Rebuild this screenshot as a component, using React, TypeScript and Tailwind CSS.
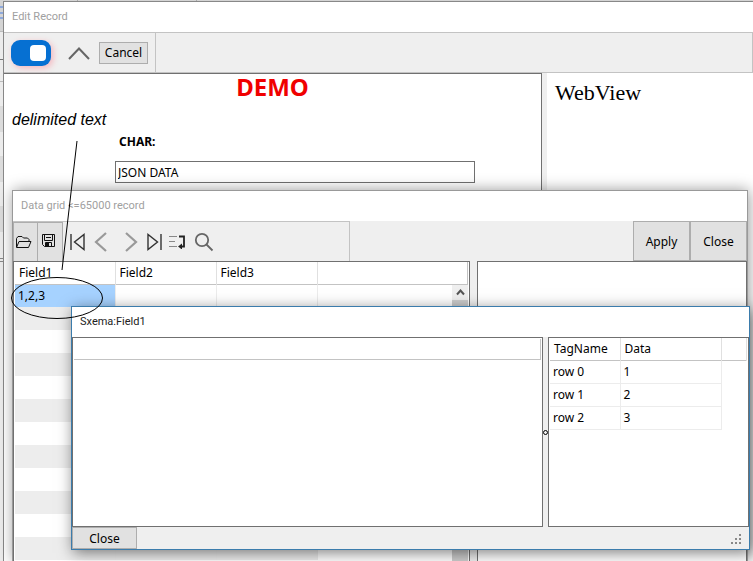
import { FC, ReactNode } from "react";

const GRID_FIELDS = ["Field1", "Field2", "Field3"];
const GRID_ROWS = [["1,2,3", "", ""], ...Array.from({ length: 11 }, () => ["", "", ""])];
const TAG_ROWS = [
  ["row 0", "1"],
  ["row 1", "2"],
  ["row 2", "3"],
];

const TitleBar: FC<{ children: ReactNode; active?: boolean }> = ({ children, active }) => (
  <h2
    className={`h-[30px] shrink-0 bg-white px-2 font-[Roboto,sans-serif] text-[11px] leading-[30px] ${
      active ? "text-[#222]" : "text-[#a0a0a0]"
    }`}
  >
    {children}
  </h2>
);

const IconButton: FC<{ label: string; className: string; children: ReactNode }> = ({ label, className, children }) => (
  <button type="button" aria-label={label} className={`flex h-10 shrink-0 items-center justify-center ${className}`}>
    {children}
  </button>
);

// Sliver of the main window that shows behind the dialogs
const Backdrop: FC = () => (
  <div className="flex h-full flex-col bg-[#ececec]">
    <div className="flex h-8 border-b border-[#bbb] bg-[#d4d4d4]">
      <div className="my-1.5 flex w-3 flex-col justify-between">
        <div className="h-0.5 bg-[#8ea9dc]" />
        <div className="h-0.5 bg-[#8ea9dc]" />
        <div className="h-0.5 bg-[#8ea9dc]" />
        <div className="h-0.5" />
      </div>
      <div className="h-1 w-[66px] border-r border-[#aaa]" />
      <div className="h-1 w-[119px] border-r border-[#aaa]" />
    </div>
    <div className="h-7 border-b border-[#777]" />
    <div className="h-[22px] border-b border-[#bbb]" />
    <div className="h-6" />
    <div className="h-[26px] bg-[#dcdcdc]" />
    <div className="h-6" />
    <div className="h-[26px] bg-[#dcdcdc]" />
    <div className="h-6" />
    <div className="h-[26px] bg-[#dcdcdc]" />
    <div className="h-[26px]" />
    <div className="h-1 border-y border-[#888]" />
  </div>
);

const EditRecordWindow: FC = () => (
  <section className="absolute top-px -right-px bottom-0 left-[3px] flex flex-col border-t border-l border-[#888] bg-[#efefef]">
    <TitleBar>Edit Record</TitleBar>
    <div className="mr-px flex h-[41px] shrink-0 border-y border-r border-[#c3c3c3]">
      <div className="flex items-center border-r border-[#c3c3c3] px-[7px]">
        <label className="relative block h-[26px] w-10 rounded-[9px] bg-[#0670d2] shadow-[2px_2px_6px_#f5b5bd]">
          <input type="checkbox" defaultChecked aria-label="Enabled" className="peer absolute inset-0 z-10 size-full opacity-0" />
          <span className="absolute top-[5px] left-[5px] size-4 rounded bg-white peer-checked:left-[19px]" />
        </label>
        <button type="button" aria-label="Up" className="ml-4 flex h-10 w-6 items-center justify-center">
          <svg width="22" height="16" viewBox="0 0 22 16" fill="none" stroke="#666" strokeWidth="2">
            <path d="M1 14 11 3.5 21 14" />
          </svg>
        </button>
        <button type="button" className="ml-2 h-[22px] w-[49px] border border-[#adadad] bg-[#e1e1e1] text-xs leading-5">
          Cancel
        </button>
      </div>
    </div>
    <div className="flex min-h-0 flex-1">
      <form className="flex-1 border border-b-0 border-l-0 border-[#707070] bg-white">
        <h1 className="h-[30px] text-center text-2xl leading-[26px] font-bold text-[#f00000]">DEMO</h1>
        <p className="ml-2 h-8 font-[Liberation_Sans,sans-serif] text-base leading-8 italic">delimited text</p>
        <div className="mr-[66px] ml-[111px]">
          <label htmlFor="char" className="block h-[25px] pl-1 text-xs leading-3 font-bold">
            CHAR:
          </label>
          <input
            id="char"
            defaultValue="JSON DATA"
            className="block h-[22px] w-full border border-[#707070] bg-white px-0.5 text-xs outline-none"
          />
        </div>
      </form>
      <div className="ml-[5px] w-[207px] shrink-0 bg-white px-2 py-1 font-[Liberation_Serif,serif] text-[22px] leading-8">
        WebView
      </div>
    </div>
  </section>
);

const DataGridWindow: FC = () => (
  <section className="absolute top-[190px] right-[5px] bottom-0 left-3 flex flex-col border border-b-0 border-[#999] bg-[#efefef] shadow-[1px_0_14px_rgba(0,0,0,0.4)]">
    <TitleBar>Data grid &lt;=65000 record</TitleBar>
    <div className="flex h-10 shrink-0 justify-between">
      <div className="flex w-[337px] border-t border-r border-[#c3c3c3]">
        <IconButton label="Open" className="w-[25px] border border-[#adadad] bg-[#e1e1e1] pr-1">
          <svg width="17" height="14" viewBox="0 0 17 14" fill="none" stroke="#111">
            <path d="M1.5 12V3.5L3 1.5h4L8.5 3h4L14 4.5V6M1.5 12.5 4 6.5h12l-2.5 6z" />
          </svg>
        </IconButton>
        <IconButton label="Save" className="w-[25px] border border-l-0 border-[#adadad] bg-[#e1e1e1] pr-1 pb-1">
          <svg width="13" height="13" viewBox="0 0 13 13" fill="none" stroke="#111">
            <path d="M.5.5h12v12h-10l-2-2zM2.5.5v6h8v-6M3.5 12.5v-4h6v4" />
            <path d="M4 9h3v3H4z" fill="#111" stroke="none" />
            <path d="M4 3.5h5" />
          </svg>
        </IconButton>
        <IconButton label="First" className="w-7 pl-0.5">
          <svg width="16" height="18" viewBox="0 0 16 18" fill="none" stroke="#333" strokeWidth="1.4">
            <path d="M1 1v16M14 1.5v15L4.5 9z" />
          </svg>
        </IconButton>
        <IconButton label="Previous" className="w-[18px]">
          <svg width="13" height="20" viewBox="0 0 13 20" fill="none" stroke="#999" strokeWidth="2.2">
            <path d="M12 1 2 10l10 9" />
          </svg>
        </IconButton>
        <IconButton label="Next" className="ml-2.5 w-6">
          <svg width="13" height="20" viewBox="0 0 13 20" fill="none" stroke="#999" strokeWidth="2.2">
            <path d="m1 1 10 9-10 9" />
          </svg>
        </IconButton>
        <IconButton label="Last" className="w-[22px]">
          <svg width="16" height="18" viewBox="0 0 16 18" fill="none" stroke="#333" strokeWidth="1.4">
            <path d="M15 1v16M2 1.5v15L11.5 9z" />
          </svg>
        </IconButton>
        <IconButton label="Wrap" className="w-6">
          <svg width="18" height="14" viewBox="0 0 18 14" fill="none">
            <path d="M1 1.5h8M1 6.5h6M1 11.5h8" stroke="#888" strokeWidth="1.2" />
            <path d="M11 1.5h5v10h-4" stroke="#222" strokeWidth="1.8" />
            <path d="m10 11.5 4-3v6z" fill="#222" />
          </svg>
        </IconButton>
        <IconButton label="Search" className="w-[30px]">
          <svg width="20" height="20" viewBox="0 0 20 20" fill="none" stroke="#666" strokeWidth="1.8">
            <circle cx="8" cy="8" r="6.2" />
            <path d="m12.5 12.5 6 6" />
          </svg>
        </IconButton>
      </div>
      <div className="flex text-xs">
        <button type="button" className="w-[57px] border border-[#adadad] bg-[#e1e1e1] pt-0.5">
          Apply
        </button>
        <button type="button" className="w-[57px] border border-[#adadad] bg-[#e1e1e1] pt-0.5">
          Close
        </button>
      </div>
    </div>
    <div className="flex min-h-0 flex-1">
      <div className="flex w-[457px] border border-b-0 border-[#707070] bg-white px-px">
        <div className="min-w-0 flex-1 overflow-hidden">
          <table className="w-full table-fixed border-collapse text-xs">
            <thead>
              <tr className="h-[22px] border-b border-[#c3c3c3]">
                {GRID_FIELDS.map((field) => (
                  <th
                    key={field}
                    scope="col"
                    className="w-[101px] border-r border-[#e0e0e0] px-1 text-left font-normal first:w-[100px]"
                  >
                    {field}
                  </th>
                ))}
                <td />
              </tr>
            </thead>
            <tbody>
              {GRID_ROWS.map((row, i) => (
                <tr key={i} className="h-[23px]">
                  {row.map((value, j) => (
                    <td
                      key={j}
                      className={`border-r border-[#ececec] px-[3px] ${
                        i === 0 && j === 0 ? "bg-[#a6d2ff]" : i % 2 ? "bg-[#ededed]" : "bg-white"
                      }`}
                    >
                      {value}
                    </td>
                  ))}
                  <td />
                </tr>
              ))}
            </tbody>
          </table>
        </div>
        <div className="flex w-4 flex-col">
          <div className="h-[23px] shrink-0 border-r border-b border-[#c3c3c3]" />
          <div className="flex h-[15px] shrink-0 items-center justify-center bg-[#efefef]">
            <svg width="9" height="7" viewBox="0 0 9 7" fill="none" stroke="#555" strokeWidth="2">
              <path d="m1 5.5 3.5-4 3.5 4" />
            </svg>
          </div>
          <div className="flex-1 bg-[#cdcdcd]" />
        </div>
      </div>
      <div className="ml-[7px] flex-1 border border-b-0 border-[#707070] bg-white" />
    </div>
  </section>
);

const SchemaWindow: FC = () => (
  <section className="absolute top-[306px] right-[3px] left-[71px] flex h-[244px] flex-col border border-[#3b7cac] bg-[#efefef] shadow-[2px_3px_14px_rgba(0,0,0,0.5)]">
    <TitleBar active>Sxema:Field1</TitleBar>
    <div className="flex min-h-0 flex-1">
      <div className="flex-1 border border-[#707070] bg-white p-px">
        <div className="h-[21px] border-r border-b border-[#c3c3c3]" />
      </div>
      <div className="flex w-[5px] items-center justify-center">
        <span className="size-[5px] shrink-0 rounded-full border border-black" />
      </div>
      <div className="w-[201px] border border-[#707070] bg-white px-px">
        <table className="w-full table-fixed border-collapse text-xs">
          <thead>
            <tr className="h-[22px] border-b border-[#c3c3c3]">
              <th scope="col" className="w-[70px] border-r border-[#e0e0e0] px-1 text-left font-normal">
                TagName
              </th>
              <th scope="col" className="w-[101px] border-r border-[#e0e0e0] px-1 text-left font-normal">
                Data
              </th>
              <td className="border-r border-[#e0e0e0]" />
            </tr>
          </thead>
          <tbody>
            {TAG_ROWS.map(([name, data]) => (
              <tr key={name} className="h-[23px]">
                <td className="border-r border-b border-[#ececec] px-[3px]">{name}</td>
                <td className="border-r border-b border-[#ececec] px-[3px]">{data}</td>
                <td />
              </tr>
            ))}
          </tbody>
        </table>
      </div>
    </div>
    <div className="flex h-[22px] shrink-0 items-end justify-between">
      <button type="button" className="h-full w-[65px] border border-[#adadad] bg-[#e1e1e1] pt-0.5 text-xs">
        Close
      </button>
      <svg className="mr-[7px] mb-1" width="12" height="12" viewBox="0 0 12 12" fill="#888">
        <path d="M9 1h2v2H9zM5 5h2v2H5zM9 5h2v2H9zM1 9h2v2H1zM5 9h2v2H5zM9 9h2v2H9z" />
      </svg>
    </div>
  </section>
);

// Hand-drawn pointer from the caption to the delimited cell
const Callout: FC = () => (
  <svg className="pointer-events-none absolute top-[140px] left-[10px]" width="96" height="182" viewBox="0 0 96 182" fill="none" stroke="#000">
    <path d="M67 1 52 130" />
    <ellipse cx="47" cy="158" rx="45.5" ry="20.5" />
  </svg>
);

export default function App() {
  return (
    <main className="relative h-screen overflow-hidden font-[Noto_Sans,sans-serif] text-black">
      <Backdrop />
      <EditRecordWindow />
      <DataGridWindow />
      <SchemaWindow />
      <Callout />
    </main>
  );
}
